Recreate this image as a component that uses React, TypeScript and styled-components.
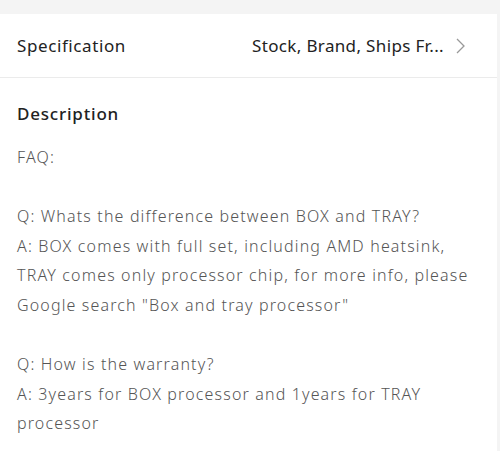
import React from 'react';
import styled, { createGlobalStyle } from 'styled-components';

const GlobalStyle = createGlobalStyle`
    html, body {
        margin: 0;
        padding: 0;
        background: #f4f4f4;
    }
    body {
        font-family: 'Noto Sans', 'DejaVu Sans', sans-serif;
    }
`;

const Page = styled.div`
    width: 500px;
    height: 451px;
    padding-top: 14px;
    padding-right: 3px;
    box-sizing: border-box;
    overflow: hidden;
`;

const Card = styled.div`
    background: #ffffff;
    height: 100%;
`;

const SpecRow = styled.div`
    display: flex;
    align-items: center;
    height: 63px;
    padding: 0 32px 0 17px;
    border-bottom: 1px solid #ebebeb;
`;

const SpecLabel = styled.div`
    flex: 1;
    font-size: 17px;
    letter-spacing: 0.6px;
    color: #222;
`;

const SpecValue = styled.div`
    font-size: 17px;
    letter-spacing: 0.35px;
    color: #222;
    white-space: nowrap;
`;

const Chevron = styled.svg`
    margin-left: 12px;
    width: 9px;
    height: 16px;
`;

const Section = styled.div`
    padding: 25px 17px 0;
`;

const SectionTitle = styled.div`
    font-size: 17px;
    letter-spacing: 0.8px;
    font-weight: 500;
    color: #222;
    line-height: 22px;
    margin-bottom: 18px;
`;

const Line = styled.div`
    font-size: 16px;
    letter-spacing: 1.15px;
    font-weight: 300;
    color: #555;
    line-height: 29.6px;
    height: 29.6px;
    white-space: nowrap;
`;

const lines = [
    'FAQ:',
    '',
    'Q: Whats the difference between BOX and TRAY?',
    'A: BOX comes with full set, including AMD heatsink,',
    'TRAY comes only processor chip, for more info, please',
    'Google search "Box and tray processor"',
    '',
    'Q: How is the warranty?',
    'A: 3years for BOX processor and 1years for TRAY',
    'processor',
];

export default function App() {
    return (
        <Page>
            <GlobalStyle />
            <Card>
                <SpecRow>
                    <SpecLabel>Specification</SpecLabel>
                    <SpecValue>Stock, Brand, Ships Fr...</SpecValue>
                    <Chevron viewBox="0 0 9 16">
                        <path d="M1 1 L8 8 L1 15" fill="none" stroke="#999" strokeWidth="1.3" />
                    </Chevron>
                </SpecRow>
                <Section>
                    <SectionTitle>Description</SectionTitle>
                    {lines.map((text, i) => (
                        <Line key={i}>{text || '\u00a0'}</Line>
                    ))}
                </Section>
            </Card>
        </Page>
    );
}
